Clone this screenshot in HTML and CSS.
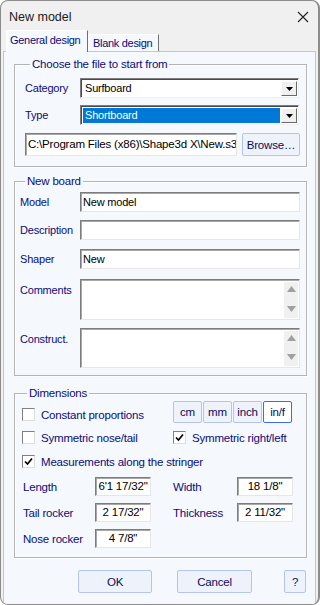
FILE: index.html
```html
<!DOCTYPE html>
<html lang="en">
<head>
  <meta charset="UTF-8">
  <meta name="viewport" content="width=device-width, initial-scale=1.0">
  <title>New model</title>
  <link rel="stylesheet" href="styles.css">
</head>
<body>
  <div class="window">
    <div class="titlebar">
      <span class="title">New model</span>
      <svg class="close" width="12" height="12" viewBox="0 0 12 12">
        <path d="M1 1 L11 11 M11 1 L1 11" stroke="#222" stroke-width="1.1" fill="none"/>
      </svg>
    </div>

    <div class="tabs">
      <div class="tab active">General design</div>
      <div class="tab">Blank design</div>
    </div>

    <div class="panel">
      <fieldset class="group group-file">
        <legend>Choose the file to start from</legend>
        <div class="row">
          <span class="lbl lbl-file">Category</span>
          <div class="combo">
            <span class="combo-value">Surfboard</span>
            <span class="combo-btn"><svg width="7" height="4" viewBox="0 0 7 4"><path d="M0 0 H7 L3.5 4 Z" fill="#000"/></svg></span>
          </div>
        </div>
        <div class="row row-type">
          <span class="lbl lbl-file">Type</span>
          <div class="combo">
            <span class="combo-value selected">Shortboard</span>
            <span class="combo-btn"><svg width="7" height="4" viewBox="0 0 7 4"><path d="M0 0 H7 L3.5 4 Z" fill="#000"/></svg></span>
          </div>
        </div>
        <div class="row row-path">
          <div class="field path">C:\Program Files (x86)\Shape3d X\New.s3dx</div>
          <button class="btn browse">Browse…</button>
        </div>
      </fieldset>

      <fieldset class="group group-board">
        <legend>New board</legend>
        <div class="row">
          <span class="lbl">Model</span>
          <div class="field wide">New model</div>
        </div>
        <div class="row row-gap">
          <span class="lbl">Description</span>
          <div class="field wide"></div>
        </div>
        <div class="row row-gap shaper">
          <span class="lbl">Shaper</span>
          <div class="field wide">New</div>
        </div>
        <div class="row row-area comments">
          <span class="lbl lbl-top">Comments</span>
          <div class="field wide area">
            <span class="area-text"></span>
            <span class="scroll">
              <svg width="9" height="6" viewBox="0 0 9 6"><path d="M0 6 L4.5 0 L9 6 Z" fill="#a0a0a0"/></svg>
              <svg width="9" height="6" viewBox="0 0 9 6"><path d="M0 0 H9 L4.5 6 Z" fill="#a0a0a0"/></svg>
            </span>
          </div>
        </div>
        <div class="row row-area">
          <span class="lbl lbl-top">Construct.</span>
          <div class="field wide area short">
            <span class="area-text"></span>
            <span class="scroll">
              <svg width="9" height="6" viewBox="0 0 9 6"><path d="M0 6 L4.5 0 L9 6 Z" fill="#a0a0a0"/></svg>
              <svg width="9" height="6" viewBox="0 0 9 6"><path d="M0 0 H9 L4.5 6 Z" fill="#a0a0a0"/></svg>
            </span>
          </div>
        </div>
      </fieldset>

      <fieldset class="group group-dim">
        <legend>Dimensions</legend>
        <div class="dim-row dim-first">
          <label class="check">
            <span class="box"></span>Constant proportions
          </label>
          <div class="units">
            <button class="btn unit">cm</button>
            <button class="btn unit">mm</button>
            <button class="btn unit">inch</button>
            <button class="btn unit current">in/f</button>
          </div>
        </div>
        <div class="dim-row dim-second">
          <label class="check">
            <span class="box"></span>Symmetric nose/tail
          </label>
          <label class="check">
            <span class="box"><svg width="9" height="9" viewBox="0 0 9 9"><path d="M1 4.5 L3.5 7 L8 1.5" stroke="#000" stroke-width="1.7" fill="none"/></svg></span>Symmetric right/left
          </label>
        </div>
        <div class="dim-row dim-third">
          <label class="check">
            <span class="box"><svg width="9" height="9" viewBox="0 0 9 9"><path d="M1 4.5 L3.5 7 L8 1.5" stroke="#000" stroke-width="1.7" fill="none"/></svg></span>Measurements along the stringer
          </label>
        </div>

        <div class="measures">
          <span class="m-lbl">Length</span>
          <div class="field num">6'1 17/32"</div>
          <span class="m-lbl second">Width</span>
          <div class="field num">18 1/8"</div>

          <span class="m-lbl">Tail rocker</span>
          <div class="field num">2 17/32"</div>
          <span class="m-lbl second">Thickness</span>
          <div class="field num">2 11/32"</div>

          <span class="m-lbl">Nose rocker</span>
          <div class="field num">4 7/8"</div>
        </div>
      </fieldset>

      <div class="actions">
        <button class="btn action ok">OK</button>
        <button class="btn action cancel">Cancel</button>
        <button class="btn action help">?</button>
      </div>
    </div>
  </div>
</body>
</html>
```

FILE: styles.css
```css
body {
  margin: 0;
  background: #ffffff;
  font-family: "Liberation Sans", Arial, sans-serif;
  font-size: 11px;
  letter-spacing: -0.2px;
  color: #0c0c78;
}

.window {
  width: 320px;
  height: 605px;
  box-sizing: border-box;
  border: 1px solid #8c8c8c;
  border-right: 2px solid #8c8c8c;
  border-radius: 8px;
  background: #f0f0f0;
  display: flex;
  flex-direction: column;
  overflow: hidden;
}

/* title bar */
.titlebar {
  height: 30px;
  display: flex;
  align-items: center;
  justify-content: space-between;
  padding: 0 9px 0 8px;
  flex-shrink: 0;
}

.title {
  font-size: 12.5px;
  letter-spacing: 0;
  color: #1a1a1a;
  margin-top: 1px;
}

.close {
  margin-top: 2px;
}

/* tabs */
.tabs {
  height: 20px;
  display: flex;
  align-items: flex-end;
  padding-left: 5px;
  flex-shrink: 0;
}

.tab {
  height: 17px;
  box-sizing: border-box;
  padding: 2px 0 0 4px;
  background: #f5f8fd;
  border: 1px solid #ffffff;
  border-right-color: #707070;
  border-bottom: none;
  font-size: 11px;
  letter-spacing: -0.3px;
  color: #0c0c78;
  white-space: nowrap;
}

.tab.active {
  width: 82px;
  height: 22px;
  padding: 3px 0 0 3px;
  margin-bottom: -1px;
  position: relative;
  z-index: 1;
}

.tab:not(.active) {
  width: 71px;
  padding-left: 4px;
}

.panel {
  flex: 1;
  margin: 0 2px 0 2px;
  background: #f5f8fd;
  border: 1px solid #c6c6c6;
  border-bottom: none;
  display: flex;
  flex-direction: column;
}

/* group boxes */
.group {
  margin: 6px 8px 0 10px;
  padding: 0;
  border: 1px solid #b4b4b4;
  box-shadow: inset 1px 1px 0 #ffffff, 1px 1px 0 #ffffff;
}

.group legend {
  padding: 0 2px;
  margin-left: 5px;
  line-height: 13px;
  font-size: 11.5px;
}

.group-file {
  padding: 7px 6px 10px 10px;
}

.group-board {
  margin-top: 8px;
  padding: 4px 6px 7px 5px;
}

.group-dim {
  margin-top: 11px;
  padding: 1px 0 9px 7px;
}

.row {
  display: flex;
  align-items: center;
}

.row-type {
  margin-top: 7px;
}

.row-path {
  margin-top: 8px;
  gap: 5px;
}

.row-gap {
  margin-top: 8px;
}

.row-gap.shaper {
  margin-top: 9px;
}

.row-area {
  margin-top: 8px;
  align-items: flex-start;
}

.row-area.comments {
  margin-top: 10px;
}

.lbl {
  width: 60px;
  flex-shrink: 0;
}

.lbl-file {
  width: 55px;
}

.lbl-top {
  padding-top: 5px;
}

/* combo boxes */
.combo {
  width: 219px;
  height: 20px;
  box-sizing: border-box;
  display: flex;
  background: #ffffff;
  border: 1px solid;
  border-color: #7c7c7c #f0f0f0 #f0f0f0 #7c7c7c;
  box-shadow: inset 1px 1px 0 #4a4a4a;
  padding: 2px 1px 1px 2px;
}

.combo-value {
  flex: 1;
  line-height: 15px;
  padding-left: 2px;
  color: #000000;
}

.combo-value.selected {
  background: #0078d7;
  color: #ffffff;
}

.combo-btn {
  width: 16px;
  box-sizing: border-box;
  background: #f0f0f0;
  border: 1px solid;
  border-color: #ffffff #6a6a6a #6a6a6a #ffffff;
  display: flex;
  align-items: center;
  justify-content: center;
  margin-left: 1px;
}

/* text fields */
.field {
  height: 20px;
  box-sizing: border-box;
  background: #ffffff;
  border: 1px solid;
  border-color: #7c7c7c #e6e6e6 #e6e6e6 #7c7c7c;
  box-shadow: inset 1px 1px 0 #a8a8a8;
  padding: 0 2px;
  line-height: 18px;
  color: #000000;
  white-space: nowrap;
  overflow: hidden;
}

.field.wide {
  width: 220px;
}

.path {
  width: 212px;
  height: 23px;
  line-height: 21px;
  font-size: 11.5px;
}

.area {
  height: 41px;
  display: flex;
  padding: 0 1px 0 2px;
}

.area.short {
  height: 40px;
}

.area-text {
  flex: 1;
}

.scroll {
  width: 14px;
  margin: 2px 0 1px;
  background: #f0f0f0;
  display: flex;
  flex-direction: column;
  align-items: center;
  justify-content: space-between;
  padding: 4px 0 6px;
  box-sizing: border-box;
}

/* buttons */
.btn {
  font-family: "Liberation Sans", Arial, sans-serif;
  font-size: 11.5px;
  letter-spacing: -0.2px;
  color: #0c0c78;
  background: #eef2fa;
  border: 1px solid #b3c5ee;
  border-radius: 2px;
  padding: 0;
  cursor: pointer;
}

.browse {
  width: 58px;
  height: 23px;
  color: #0c0c5a;
}

/* dimensions */
.dim-row {
  display: flex;
}

.dim-first {
  height: 22px;
  align-items: flex-end;
}

.dim-first .check {
  width: 151px;
  margin-bottom: 2px;
}

.dim-second {
  margin-top: 8px;
}

.dim-second .check:first-child {
  width: 151px;
}

.dim-third {
  margin-top: 11px;
}

.check {
  display: flex;
  align-items: center;
  gap: 6px;
  font-size: 11.5px;
  height: 13px;
}

.box {
  width: 13px;
  height: 13px;
  box-sizing: border-box;
  background: #ffffff;
  border: 1px solid;
  border-color: #808080 #dcdcdc #dcdcdc #808080;
  display: flex;
  align-items: center;
  justify-content: center;
  flex-shrink: 0;
}

.units {
  display: flex;
  gap: 1px;
}

.unit {
  width: 29px;
  height: 22px;
  color: #0c0c5a;
}

.unit.current {
  background: #ffffff;
  border-color: #3d6cf2;
}

.measures {
  margin-top: 9px;
  display: grid;
  grid-template-columns: 72px 56px 86px 56px;
  grid-auto-rows: 19px;
  row-gap: 7px;
  align-items: center;
  padding-left: 1px;
}

.m-lbl {
  font-size: 11.5px;
}

.m-lbl.second {
  padding-left: 22px;
}

.field.num {
  height: 19px;
  text-align: center;
  font-size: 11.5px;
  line-height: 17px;
  padding: 0;
}

/* bottom buttons */
.actions {
  margin-top: 12px;
  display: flex;
  justify-content: flex-end;
  padding-right: 9px;
}

.action {
  height: 23px;
  color: #0c0c5a;
}

.ok {
  width: 74px;
  margin-right: 25px;
}

.cancel {
  width: 75px;
  margin-right: 32px;
}

.help {
  width: 22px;
}
```
